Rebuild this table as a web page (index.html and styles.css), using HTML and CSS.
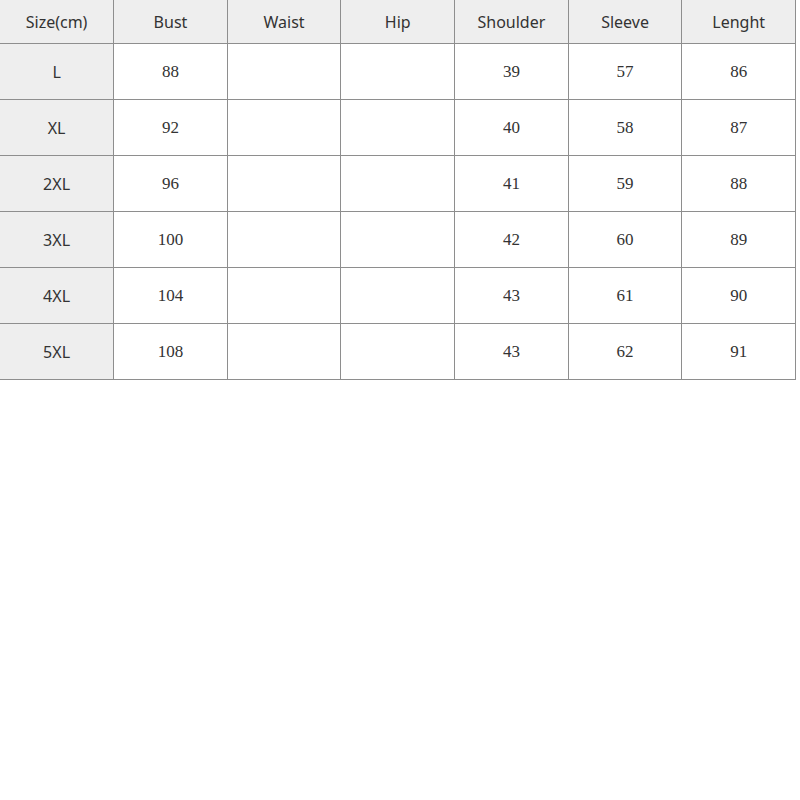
FILE: index.html
```html
<!DOCTYPE html>
<html>
<head>
<meta charset="utf-8">
<link rel="stylesheet" href="styles.css">
</head>
<body>
<table class="size-table">
  <thead>
    <tr>
      <th>Size(cm)</th><th>Bust</th><th>Waist</th><th>Hip</th><th>Shoulder</th><th>Sleeve</th><th>Lenght</th>
    </tr>
  </thead>
  <tbody>
    <tr><th>L</th><td>88</td><td></td><td></td><td>39</td><td>57</td><td>86</td></tr>
    <tr><th>XL</th><td>92</td><td></td><td></td><td>40</td><td>58</td><td>87</td></tr>
    <tr><th>2XL</th><td>96</td><td></td><td></td><td>41</td><td>59</td><td>88</td></tr>
    <tr><th>3XL</th><td>100</td><td></td><td></td><td>42</td><td>60</td><td>89</td></tr>
    <tr><th>4XL</th><td>104</td><td></td><td></td><td>43</td><td>61</td><td>90</td></tr>
    <tr><th>5XL</th><td>108</td><td></td><td></td><td>43</td><td>62</td><td>91</td></tr>
  </tbody>
</table>
</body>
</html>
```
FILE: styles.css
```css
html, body {
  margin: 0;
  padding: 0;
  background: #ffffff;
}
.size-table {
  border-collapse: collapse;
  table-layout: fixed;
  width: 796px;
  color: #333333;
}
.size-table th,
.size-table td {
  border-right: 1px solid #8e8e8e;
  border-bottom: 1px solid #8e8e8e;
  text-align: center;
  vertical-align: middle;
  padding: 2px 0 0 0;
  overflow: hidden;
}
.size-table th {
  background: #eeeeee;
  font-family: "Noto Sans", "Open Sans", sans-serif;
  font-weight: normal;
  font-size: 16px;
}
.size-table thead tr {
  height: 43px;
}
.size-table tbody tr {
  height: 56px;
}
.size-table td {
  background: #ffffff;
  font-family: "Liberation Serif", serif;
  font-size: 17px;
}
```
